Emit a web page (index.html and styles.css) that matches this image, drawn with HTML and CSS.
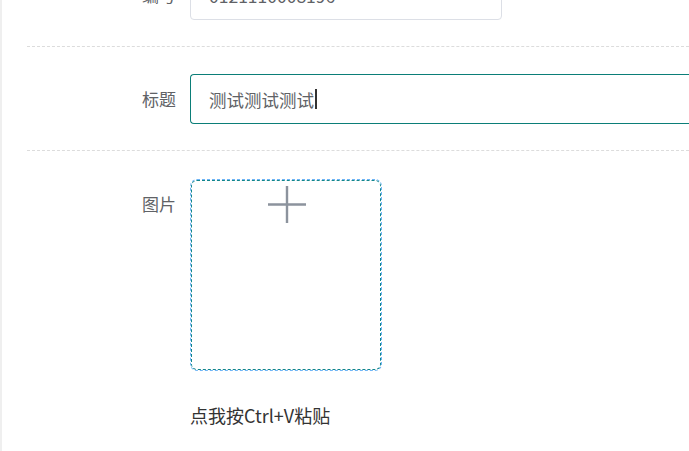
FILE: index.html
```html
<!DOCTYPE html>
<html lang="zh">
<head>
<meta charset="utf-8">
<link rel="stylesheet" href="styles.css">
</head>
<body>
<div class="page">
  <div class="side"></div>
  <div class="form">
    <div class="item">
      <div class="label">编号</div>
      <div class="input plain">0121110008196</div>
    </div>
    <div class="item">
      <div class="label">标题</div>
      <div class="input focus">测试测试测试<span class="caret"></span></div>
    </div>
    <div class="item upload-item">
      <div class="label">图片</div>
      <div class="upload-col">
        <div class="upload-outer">
          <div class="upload-inner">
            <svg class="plus" width="40" height="40" viewBox="0 0 40 40">
              <path d="M20 1V38M1 19.5H39" stroke="#8c939d" stroke-width="2.4" fill="none"/>
            </svg>
          </div>
        </div>
        <div class="hint">点我按Ctrl+V粘贴</div>
      </div>
    </div>
  </div>
</div>
</body>
</html>
```
FILE: styles.css
```css
html, body {
  margin: 0;
  padding: 0;
  background: #fff;
  overflow: hidden;
}
body {
  font-family: "Noto Sans CJK SC", "Noto Sans", sans-serif;
  font-size: 17px;
  color: #606266;
}
.page {
  display: flex;
  height: 451px;
}
.side {
  width: 2px;
  flex: none;
  background: #efefef;
}
.form {
  flex: 1;
  margin-left: 25px;
  margin-top: -57px;
}
.item {
  display: flex;
  align-items: center;
  padding: 27px 0 26px;
  border-bottom: 1px dashed #dcdcdc;
}
.label {
  width: 163px;
  flex: none;
  padding-right: 14px;
  box-sizing: border-box;
  text-align: right;
  line-height: 24px;
}
.input {
  height: 50px;
  box-sizing: border-box;
  border-radius: 4px;
  display: flex;
  align-items: center;
  padding-left: 18px;
  color: #606266;
  font-size: 17.5px;
}
.plain {
  width: 312px;
  border: 1px solid #dcdfe6;
}
.focus {
  flex: 1;
  border: 1.5px solid #0b7e78;
  border-right: none;
  border-radius: 4px 0 0 4px;
}
.caret {
  display: inline-block;
  width: 1.5px;
  height: 20px;
  background: #333;
  margin-left: 1px;
}
.upload-item {
  align-items: flex-start;
  border-bottom: none;
  padding-top: 28px;
}
.upload-item .label {
  margin-top: 13px;
}
.upload-col {
  display: flex;
  flex-direction: column;
}
.upload-outer {
  width: 192px;
  height: 192px;
  box-sizing: border-box;
  border: 1px dashed #6fb5f5;
  border-radius: 7px;
}
.upload-inner {
  width: 100%;
  height: 100%;
  box-sizing: border-box;
  border: 1px dashed #11858e;
  border-radius: 6px;
  display: flex;
  justify-content: center;
  align-items: flex-start;
}
.plus {
  margin-top: 4px;
  margin-left: 1px;
}
.hint {
  margin-top: 32px;
  line-height: 24px;
  color: #333;
  font-size: 18px;
}
```
